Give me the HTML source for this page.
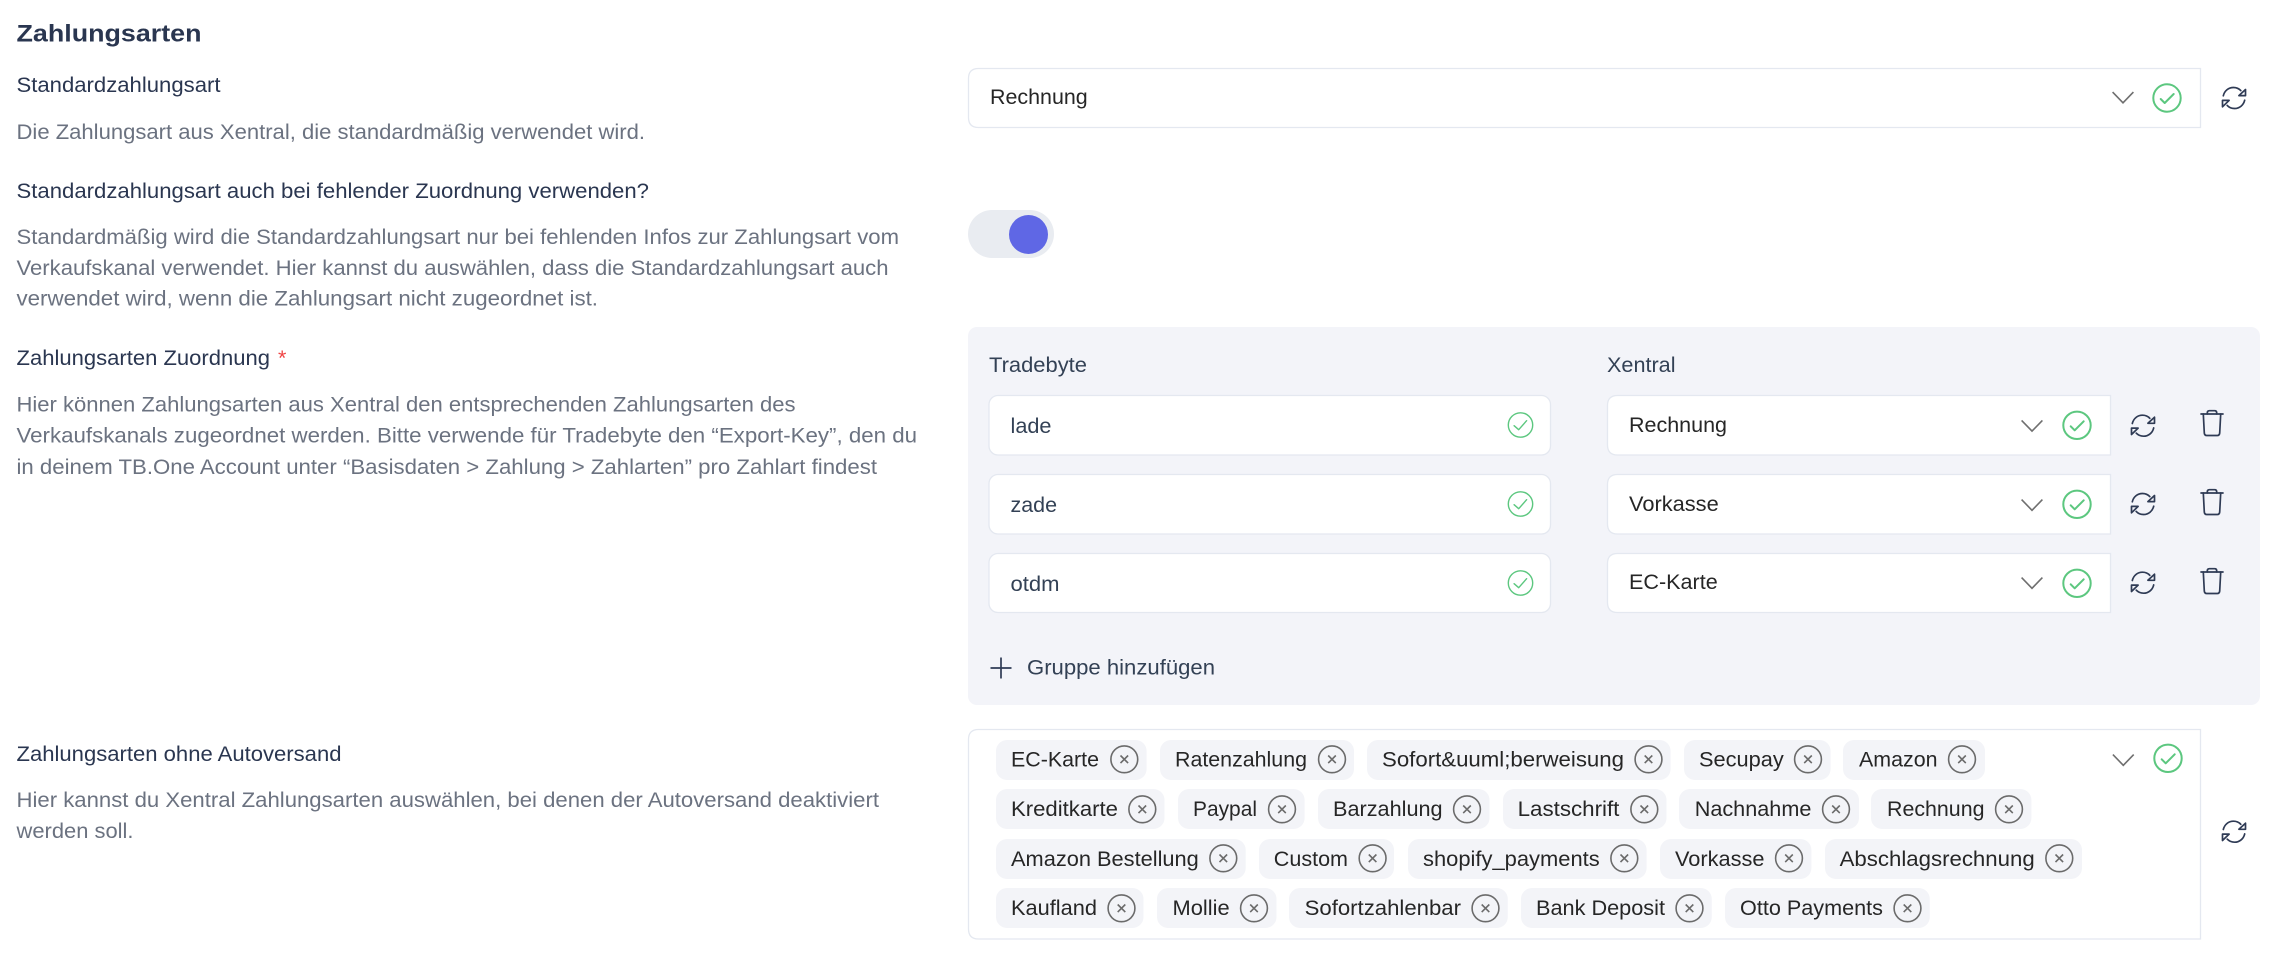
<!DOCTYPE html>
<html lang="de">
<head>
<meta charset="utf-8">
<title>Zahlungsarten</title>
<style>
html,body{margin:0;padding:0;background:#fff;width:2280px;height:964px;overflow:hidden}
svg{display:block}
text{font-family:"Liberation Sans",sans-serif;font-size:21.5px;white-space:pre}
.h{font-size:24.5px;font-weight:700;fill:#2a3650}
.l{fill:#2a3650}
.d{fill:#6b7280}
.i{fill:#334155}
.v{fill:#262626}
.bx{fill:#fff;stroke:#e4e8f0;stroke-width:1.3}
.tg{fill:#f3f4f8}
.ic{fill:none;stroke:#2f3b55;stroke-width:1.7;stroke-linecap:round;stroke-linejoin:round}
.ch{fill:none;stroke:#6f6f6f;stroke-width:1.6}
.ok{fill:none;stroke:#5cc77f;stroke-width:2;stroke-linecap:round;stroke-linejoin:round}
.ok2{fill:none;stroke:#5cc77f;stroke-width:1.4;stroke-linecap:round;stroke-linejoin:round}
.x{fill:none;stroke:#6b6b6b;stroke-width:1.6}
</style>
</head>
<body>
<svg width="2280" height="964" viewBox="0 0 2280 964" xmlns="http://www.w3.org/2000/svg">
<defs>
<g id="chev"><path class="ch" d="M-10.4-5.4 0 5.3 10.4-5.4"/></g>
<g id="chk"><circle class="ok" r="13.7"/><path class="ok" d="M-6.3 1-2.3 5 6.7-4"/></g>
<g id="chk2"><circle class="ok2" r="12.2"/><path class="ok2" d="M-6.4.7-1.8 4.7 6.1-4.3"/></g>
<g id="ref"><path class="ic" d="M-10.7-2.2C-9.5-7.2-5.5-10.5-.5-10.5 2.6-10.5 5-9.4 6.8-7.4"/><path class="ic" d="M11.5-8.5V-2.4H4.9Z"/><path class="ic" d="M10.7 2.2C9.5 7.2 5.5 10.5.5 10.5-2.6 10.5-5 9.4-6.8 7.4"/><path class="ic" d="M-11.5 8.8V2.4H-4.9Z"/></g>
<g id="trash"><path class="ic" d="M-11 0H11"/><path class="ic" d="M-4.7 0V-1.2Q-4.7-3.3-2.7-3.3H2.7Q4.7-3.3 4.7-1.2V0"/><path class="ic" d="M-8.7 0-7.7 19Q-7.5 21.5-5.2 21.5H5.2Q7.5 21.5 7.7 19L8.7 0"/></g>
<g id="cx"><circle class="x" r="13.4"/><path class="x" d="M-3.8-3.8 3.8 3.8M3.8-3.8-3.8 3.8"/></g>
</defs>

<!-- left column -->
<text class="h" x="16.5" y="41.5" textLength="185" lengthAdjust="spacingAndGlyphs">Zahlungsarten</text>
<text class="l" x="16.5" y="92" textLength="204" lengthAdjust="spacingAndGlyphs">Standardzahlungsart</text>
<text class="d" x="16.5" y="139" textLength="628.5" lengthAdjust="spacingAndGlyphs">Die Zahlungsart aus Xentral, die standardmäßig verwendet wird.</text>
<text class="l" x="16.5" y="198" textLength="632.5" lengthAdjust="spacingAndGlyphs">Standardzahlungsart auch bei fehlender Zuordnung verwenden?</text>
<text class="d" x="16.5" y="244" textLength="882.5" lengthAdjust="spacingAndGlyphs">Standardmäßig wird die Standardzahlungsart nur bei fehlenden Infos zur Zahlungsart vom</text>
<text class="d" x="16.5" y="275" textLength="872" lengthAdjust="spacingAndGlyphs">Verkaufskanal verwendet. Hier kannst du auswählen, dass die Standardzahlungsart auch</text>
<text class="d" x="16.5" y="305.5" textLength="581.5" lengthAdjust="spacingAndGlyphs">verwendet wird, wenn die Zahlungsart nicht zugeordnet ist.</text>
<text class="l" x="16.5" y="365" textLength="253.5" lengthAdjust="spacingAndGlyphs">Zahlungsarten Zuordnung</text>
<text x="278" y="365" style="fill:#ef4444">*</text>
<text class="d" x="16.5" y="411.5" textLength="779" lengthAdjust="spacingAndGlyphs">Hier können Zahlungsarten aus Xentral den entsprechenden Zahlungsarten des</text>
<text class="d" x="16.5" y="442.5" textLength="900.5" lengthAdjust="spacingAndGlyphs">Verkaufskanals zugeordnet werden. Bitte verwende für Tradebyte den “Export-Key”, den du</text>
<text class="d" x="16.5" y="474" textLength="860.5" lengthAdjust="spacingAndGlyphs">in deinem TB.One Account unter “Basisdaten &gt; Zahlung &gt; Zahlarten” pro Zahlart findest</text>
<text class="l" x="16.5" y="761" textLength="325" lengthAdjust="spacingAndGlyphs">Zahlungsarten ohne Autoversand</text>
<text class="d" x="16.5" y="807" textLength="862.5" lengthAdjust="spacingAndGlyphs">Hier kannst du Xentral Zahlungsarten auswählen, bei denen der Autoversand deaktiviert</text>
<text class="d" x="16.5" y="838" textLength="117" lengthAdjust="spacingAndGlyphs">werden soll.</text>

<!-- top select -->
<path class="bx" d="M2200.5 68.5V127.5H978.5Q968.5 127.5 968.5 117.5V78.5Q968.5 68.5 978.5 68.5Z"/>
<text class="v" x="990" y="104" textLength="97.7" lengthAdjust="spacingAndGlyphs">Rechnung</text>
<use href="#chev" x="2123" y="97.5"/>
<use href="#chk" x="2167" y="98"/>
<use href="#ref" x="2234" y="98"/>

<!-- toggle -->
<rect x="968" y="210" width="86" height="48" rx="24" fill="#e9ecf1"/>
<circle cx="1028.5" cy="234.5" r="19.5" fill="#5f67e5"/>

<!-- mapping panel -->
<rect x="968" y="327" width="1292" height="378" rx="9" fill="#f3f4f9"/>
<text class="i" x="989" y="372" textLength="98" lengthAdjust="spacingAndGlyphs">Tradebyte</text>
<text class="i" x="1607" y="372" textLength="68.5" lengthAdjust="spacingAndGlyphs">Xentral</text>

<rect class="bx" x="989" y="395.5" width="561.5" height="59.5" rx="9"/>
<text class="i" x="1010.5" y="433" textLength="41" lengthAdjust="spacingAndGlyphs">lade</text>
<use href="#chk2" x="1520.5" y="425"/>
<rect class="bx" x="989" y="474.5" width="561.5" height="59.5" rx="9"/>
<text class="i" x="1010.5" y="512" textLength="46.5" lengthAdjust="spacingAndGlyphs">zade</text>
<use href="#chk2" x="1520.5" y="504"/>
<rect class="bx" x="989" y="553.5" width="561.5" height="59" rx="9"/>
<text class="i" x="1010.5" y="591" textLength="49" lengthAdjust="spacingAndGlyphs">otdm</text>
<use href="#chk2" x="1520.5" y="583"/>

<path class="bx" d="M2110.5 395.5V455H1617.5Q1607.5 455 1607.5 445V405.5Q1607.5 395.5 1617.5 395.5Z"/>
<text class="v" x="1629" y="432" textLength="98" lengthAdjust="spacingAndGlyphs">Rechnung</text>
<use href="#chev" x="2032" y="425.8"/>
<use href="#chk" x="2077" y="425.3"/>
<use href="#ref" x="2143" y="425.7"/>
<use href="#trash" x="2212" y="414"/>

<path class="bx" d="M2110.5 474.5V534H1617.5Q1607.5 534 1607.5 524V484.5Q1607.5 474.5 1617.5 474.5Z"/>
<text class="v" x="1629" y="511" textLength="89.7" lengthAdjust="spacingAndGlyphs">Vorkasse</text>
<use href="#chev" x="2032" y="505"/>
<use href="#chk" x="2077" y="504.3"/>
<use href="#ref" x="2143" y="504"/>
<use href="#trash" x="2212" y="493"/>

<path class="bx" d="M2110.5 553.5V612.5H1617.5Q1607.5 612.5 1607.5 602.5V563.5Q1607.5 553.5 1617.5 553.5Z"/>
<text class="v" x="1629" y="589" textLength="88.7" lengthAdjust="spacingAndGlyphs">EC-Karte</text>
<use href="#chev" x="2032" y="583"/>
<use href="#chk" x="2077" y="583.3"/>
<use href="#ref" x="2143" y="582.7"/>
<use href="#trash" x="2212" y="572"/>

<path d="M990.5 668H1011.5M1001 657.5V678.5" fill="none" stroke="#2f3b55" stroke-width="1.7"/>
<text class="i" x="1027" y="674.5" textLength="188" lengthAdjust="spacingAndGlyphs">Gruppe hinzufügen</text>

<!-- tags box -->
<path class="bx" d="M2200.5 729.5V939H978.5Q968.5 939 968.5 929V739.5Q968.5 729.5 978.5 729.5Z"/>
<use href="#chev" x="2123.3" y="760"/>
<use href="#chk" x="2168" y="758.3"/>
<use href="#ref" x="2234" y="831.7"/>

<!-- row 1 -->
<rect class="tg" x="996" y="740" width="150.6" height="40" rx="11"/>
<text class="v" x="1011" y="766.5" textLength="88" lengthAdjust="spacingAndGlyphs">EC-Karte</text>
<use href="#cx" x="1124.3" y="759.3"/>
<rect class="tg" x="1160" y="740" width="194" height="40" rx="11"/>
<text class="v" x="1175" y="766.5" textLength="132" lengthAdjust="spacingAndGlyphs">Ratenzahlung</text>
<use href="#cx" x="1332" y="759.3"/>
<rect class="tg" x="1367" y="740" width="303.6" height="40" rx="11"/>
<text class="v" x="1382" y="766.5" textLength="242" lengthAdjust="spacingAndGlyphs">Sofort&amp;uuml;berweisung</text>
<use href="#cx" x="1648.5" y="759.3"/>
<rect class="tg" x="1684" y="740" width="146.6" height="40" rx="11"/>
<text class="v" x="1699" y="766.5" textLength="84.7" lengthAdjust="spacingAndGlyphs">Secupay</text>
<use href="#cx" x="1808" y="759.3"/>
<rect class="tg" x="1843" y="740" width="142" height="40" rx="11"/>
<text class="v" x="1859" y="766.5" textLength="78.5" lengthAdjust="spacingAndGlyphs">Amazon</text>
<use href="#cx" x="1962" y="759.3"/>

<!-- row 2 -->
<rect class="tg" x="996" y="789" width="168.5" height="40" rx="11"/>
<text class="v" x="1011" y="816" textLength="107" lengthAdjust="spacingAndGlyphs">Kreditkarte</text>
<use href="#cx" x="1142.3" y="809.3"/>
<rect class="tg" x="1178" y="789" width="126.6" height="40" rx="11"/>
<text class="v" x="1193" y="816" textLength="64" lengthAdjust="spacingAndGlyphs">Paypal</text>
<use href="#cx" x="1282" y="809.3"/>
<rect class="tg" x="1318" y="789" width="171.5" height="40" rx="11"/>
<text class="v" x="1333" y="816" textLength="109.6" lengthAdjust="spacingAndGlyphs">Barzahlung</text>
<use href="#cx" x="1467" y="809.3"/>
<rect class="tg" x="1503" y="789" width="163.5" height="40" rx="11"/>
<text class="v" x="1517.6" y="816" textLength="101.8" lengthAdjust="spacingAndGlyphs">Lastschrift</text>
<use href="#cx" x="1644.3" y="809.3"/>
<rect class="tg" x="1679" y="789" width="180" height="40" rx="11"/>
<text class="v" x="1694.7" y="816" textLength="116.7" lengthAdjust="spacingAndGlyphs">Nachnahme</text>
<use href="#cx" x="1836" y="809.3"/>
<rect class="tg" x="1871" y="789" width="160.4" height="40" rx="11"/>
<text class="v" x="1887" y="816" textLength="97.5" lengthAdjust="spacingAndGlyphs">Rechnung</text>
<use href="#cx" x="2009" y="809.3"/>

<!-- row 3 -->
<rect class="tg" x="996" y="839" width="249.7" height="40" rx="11"/>
<text class="v" x="1011" y="866" textLength="187.8" lengthAdjust="spacingAndGlyphs">Amazon Bestellung</text>
<use href="#cx" x="1223.3" y="858.3"/>
<rect class="tg" x="1259" y="839" width="135" height="40" rx="11"/>
<text class="v" x="1273.8" y="866" textLength="74.2" lengthAdjust="spacingAndGlyphs">Custom</text>
<use href="#cx" x="1372.6" y="858.3"/>
<rect class="tg" x="1408" y="839" width="238.6" height="40" rx="11"/>
<text class="v" x="1423" y="866" textLength="176.7" lengthAdjust="spacingAndGlyphs">shopify_payments</text>
<use href="#cx" x="1624.3" y="858.3"/>
<rect class="tg" x="1660" y="839" width="151.4" height="40" rx="11"/>
<text class="v" x="1675" y="866" textLength="89.5" lengthAdjust="spacingAndGlyphs">Vorkasse</text>
<use href="#cx" x="1789" y="858.3"/>
<rect class="tg" x="1825" y="839" width="257" height="40" rx="11"/>
<text class="v" x="1839.6" y="866" textLength="195.1" lengthAdjust="spacingAndGlyphs">Abschlagsrechnung</text>
<use href="#cx" x="2059.3" y="858.3"/>

<!-- row 4 -->
<rect class="tg" x="996" y="888" width="147.5" height="40" rx="11"/>
<text class="v" x="1011" y="915" textLength="86" lengthAdjust="spacingAndGlyphs">Kaufland</text>
<use href="#cx" x="1121.5" y="908.3"/>
<rect class="tg" x="1157" y="888" width="119.5" height="40" rx="11"/>
<text class="v" x="1172.5" y="915" textLength="57.1" lengthAdjust="spacingAndGlyphs">Mollie</text>
<use href="#cx" x="1254" y="908.3"/>
<rect class="tg" x="1289" y="888" width="218.8" height="40" rx="11"/>
<text class="v" x="1304.6" y="915" textLength="156.4" lengthAdjust="spacingAndGlyphs">Sofortzahlenbar</text>
<use href="#cx" x="1485.5" y="908.3"/>
<rect class="tg" x="1521" y="888" width="190.8" height="40" rx="11"/>
<text class="v" x="1536" y="915" textLength="129" lengthAdjust="spacingAndGlyphs">Bank Deposit</text>
<use href="#cx" x="1689.5" y="908.3"/>
<rect class="tg" x="1725" y="888" width="204.8" height="40" rx="11"/>
<text class="v" x="1740" y="915" textLength="143" lengthAdjust="spacingAndGlyphs">Otto Payments</text>
<use href="#cx" x="1907.5" y="908.3"/>
</svg>
</body>
</html>
